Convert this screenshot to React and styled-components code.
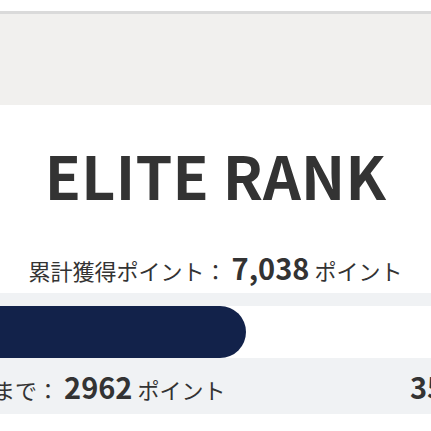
import React from 'react'
import styled, { createGlobalStyle } from 'styled-components'

const GlobalStyle = createGlobalStyle`
    html, body {
        margin: 0;
        padding: 0;
        background: #fff;
        overflow: hidden;
    }
    body {
        font-family: "Noto Sans CJK JP", "Noto Sans", sans-serif;
        color: #333;
    }
`

const Page = styled.div`
    width: 431px;
    padding-top: 11px;
`

const Banner = styled.div`
    height: 91px;
    background: #f1f0ee;
    border-top: 3px solid #dadada;
`

const Rank = styled.h1`
    margin: 40px 0 0;
    font-size: 59px;
    font-weight: 700;
    line-height: 1;
    text-align: center;
    letter-spacing: 0.3px;
`

const Total = styled.p`
    margin: 48px 0 0;
    font-size: 22px;
    line-height: 30px;
    text-align: center;
    white-space: nowrap;
`

const Num = styled.b`
    font-size: 29px;
    font-weight: 700;
    margin: 0 5px;
`

const Panel = styled.div`
    margin: 8px 0 0 -133px;
    width: 747px;
    box-sizing: border-box;
    padding: 13px 16px 0;
    background: #f0f2f4;
`

const Track = styled.div`
    height: 52px;
    background: #fff;
`

const Fill = styled.div`
    height: 100%;
    background: #12224a;
    border-radius: 0 26px 26px 0;
`

const Labels = styled.div`
    display: flex;
    justify-content: space-between;
    align-items: center;
    height: 56px;
    font-size: 22px;
    white-space: nowrap;
`

export default function App() {
    const progress = 50.8

    return (
        <Page>
            <GlobalStyle />
            <Banner />
            <Rank>ELITE RANK</Rank>
            <Total>累計獲得ポイント：<Num>7,038</Num>ポイント</Total>
            <Panel>
                <Track>
                    <Fill style={{ width: `${progress}%` }} />
                </Track>
                <Labels>
                    <span>次のランクまで：<Num>2962</Num>ポイント</span>
                    <span><Num>35,000</Num>ポイント</span>
                </Labels>
            </Panel>
        </Page>
    )
}
